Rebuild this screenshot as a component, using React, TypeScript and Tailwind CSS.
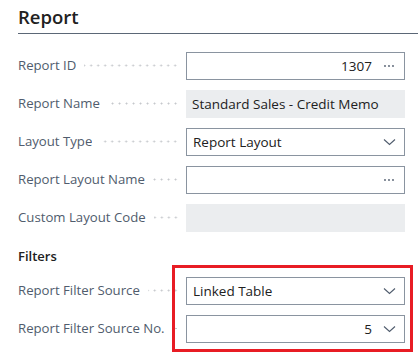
import React from "react";

const font = "font-['Segoe_UI','Open_Sans',sans-serif]";

function Dots() {
  return (
    <svg width="12" height="4" viewBox="0 0 12 4" aria-hidden>
      <circle cx="2" cy="2" r="0.9" fill="#505c6d" />
      <circle cx="6" cy="2" r="0.9" fill="#505c6d" />
      <circle cx="10" cy="2" r="0.9" fill="#505c6d" />
    </svg>
  );
}

function Chevron() {
  return (
    <svg width="13" height="8" viewBox="0 0 13 8" aria-hidden>
      <path d="M1 1.5 L6.5 6.5 L12 1.5" fill="none" stroke="#505c6d" strokeWidth="1.1" />
    </svg>
  );
}

type FieldKind = "lookup" | "readonly" | "select";

function Row({
  label,
  value,
  kind,
  alignRight,
}: {
  label: string;
  value?: string;
  kind: FieldKind;
  alignRight?: boolean;
}) {
  return (
    <div className="flex h-[28px] items-center">
      <div className="flex w-[168px] shrink-0 items-center pr-[7px]">
        <span className="truncate text-[13.2px] text-[#505c6d]">{label}</span>
        <span className="ml-[8px] h-[3px] min-w-[5px] flex-1 bg-[radial-gradient(circle,#c3c6ca_0.9px,transparent_1.1px)] bg-[length:7px_3px] bg-right bg-repeat-x" />
      </div>
      {kind === "readonly" ? (
        <div className="flex h-[28px] w-[219px] items-center bg-[#ebedef] px-[6px] text-[13.5px] text-[#212121]">
          {value}
        </div>
      ) : (
        <div className="flex h-[28px] w-[219px] items-center border border-[#8a94a0] bg-white pl-[6px] pr-[8px] text-[13.5px] text-[#212121]">
          <span className={alignRight ? "flex-1 text-right" : "flex-1"}>{value}</span>
          <span className="ml-[10px] flex w-[14px] justify-center">
            {kind === "lookup" ? <Dots /> : <Chevron />}
          </span>
        </div>
      )}
    </div>
  );
}

export default function App() {
  return (
    <div className={`relative h-[358px] w-[418px] overflow-hidden bg-white ${font}`}>
      <div className="pl-[18px]">
        <div className="h-[34px] border-b-[1.5px] border-[#5b6776] pt-[5px]">
          <h2 className="text-[18.5px] leading-[24px] font-semibold text-[#212121]">Report</h2>
        </div>
        <div className="mt-[18px] flex flex-col gap-[10px]">
          <Row label="Report ID" value="1307" kind="lookup" alignRight />
          <Row label="Report Name" value="Standard Sales - Credit Memo" kind="readonly" />
          <Row label="Layout Type" value="Report Layout" kind="select" />
          <Row label="Report Layout Name" kind="lookup" />
          <Row label="Custom Layout Code" kind="readonly" />
        </div>
        <div className="mt-[14px] h-[20px] text-[13px] leading-[20px] font-semibold text-[#212121]">Filters</div>
        <div className="mt-[11px] flex flex-col gap-[10px]">
          <Row label="Report Filter Source" value="Linked Table" kind="select" />
          <Row label="Report Filter Source No." value="5" kind="select" alignRight />
        </div>
      </div>
      <div className="pointer-events-none absolute left-[172px] top-[265px] h-[87px] w-[241px] border-[3px] border-[#e81c24]" />
    </div>
  );
}
